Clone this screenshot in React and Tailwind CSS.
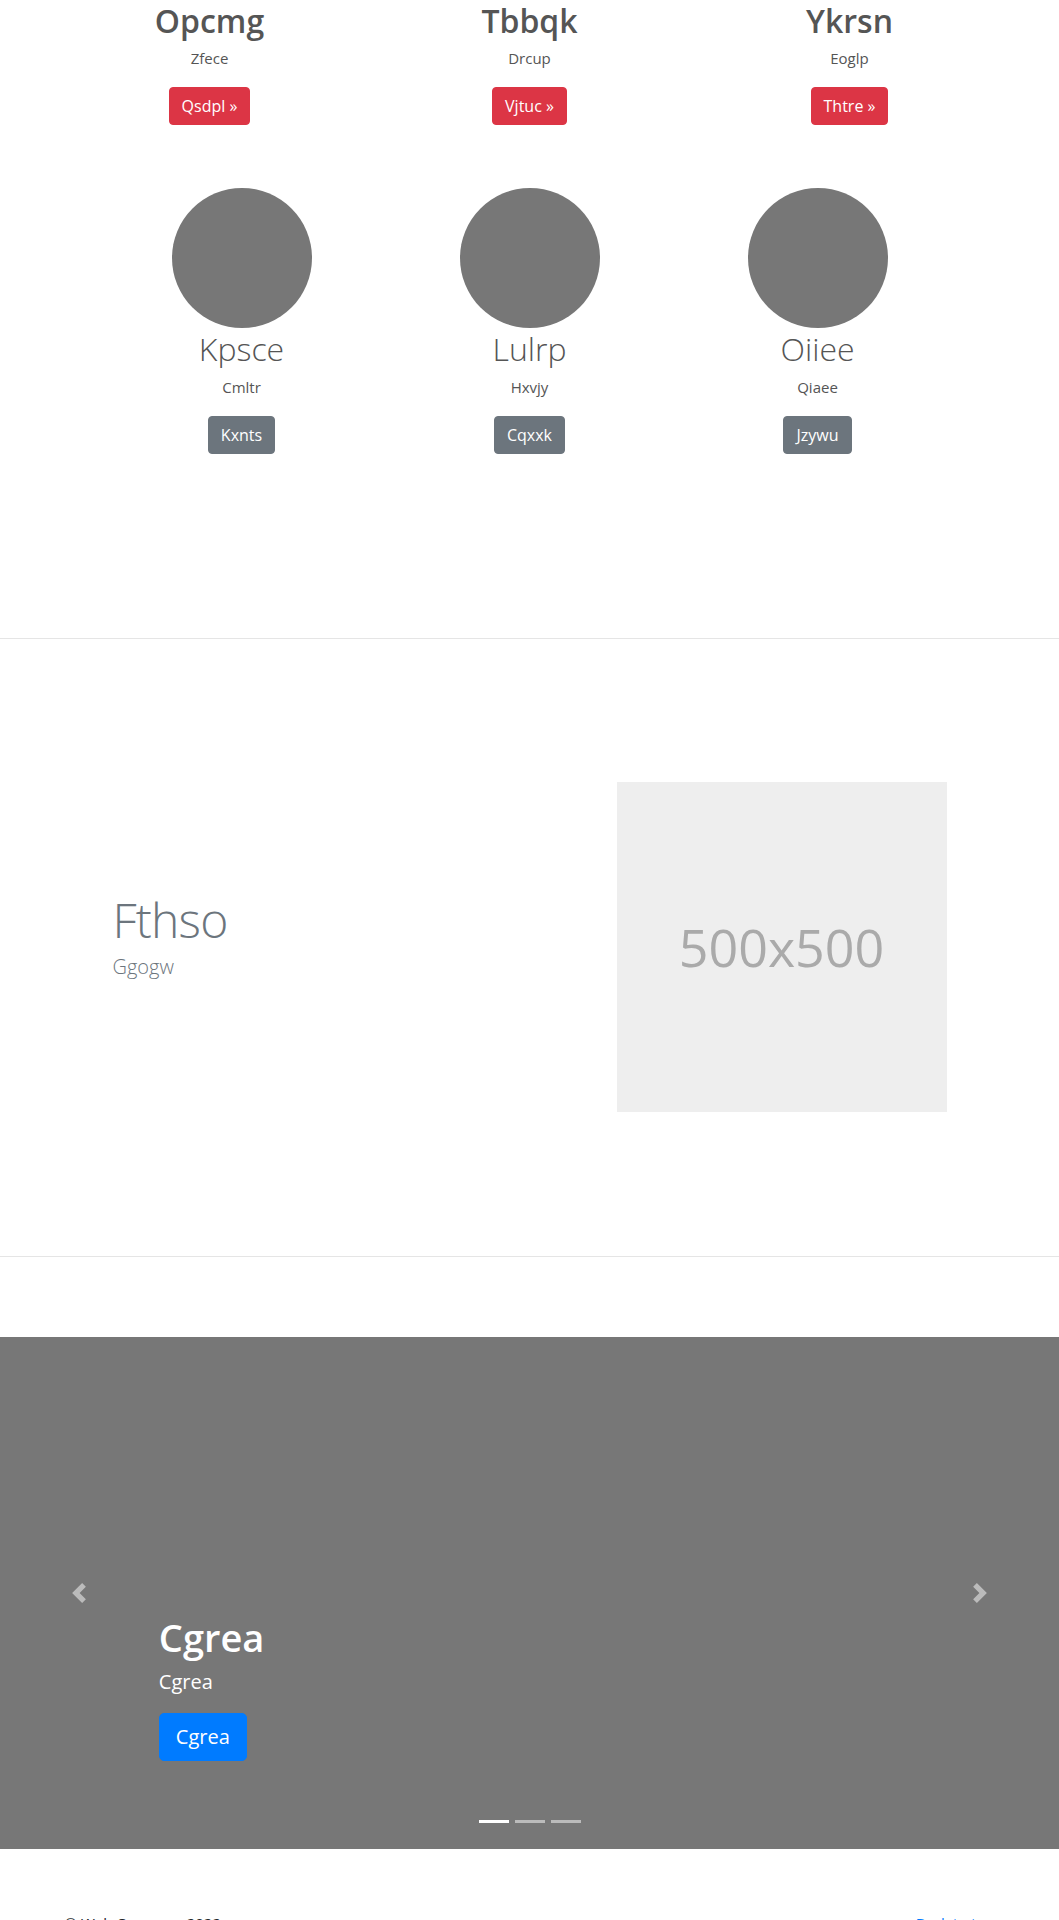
import React from 'react';

const topItems = [
  { title: 'Opcmg', text: 'Zfece', action: 'Qsdpl »' },
  { title: 'Tbbqk', text: 'Drcup', action: 'Vjtuc »' },
  { title: 'Ykrsn', text: 'Eoglp', action: 'Thtre »' },
];

const people = [
  { name: 'Kpsce', text: 'Cmltr', action: 'Kxnts' },
  { name: 'Lulrp', text: 'Hxvjy', action: 'Cqxxk' },
  { name: 'Oiiee', text: 'Qiaee', action: 'Jzywu' },
];

const ChevronLeft = () => (
  <svg width="20" height="20" viewBox="0 0 8 8" fill="#fff">
    <path d="M5.25 0l-4 4 4 4 1.5-1.5-2.5-2.5 2.5-2.5-1.5-1.5z" />
  </svg>
);

const ChevronRight = () => (
  <svg width="20" height="20" viewBox="0 0 8 8" fill="#fff">
    <path d="M2.75 0l-1.5 1.5 2.5 2.5-2.5 2.5 1.5 1.5 4-4-4-4z" />
  </svg>
);

const App = () => {
  return (
    <div className="min-h-screen bg-white font-['Open_Sans','Noto_Sans',sans-serif] text-[#212529]">
      <div className="mx-auto w-[960px]">
        {/* Top row */}
        <div className="grid grid-cols-3 pt-[2px]">
          {topItems.map((item, i) => (
            <div key={i} className="px-[15px] text-center">
              <h2 className="mb-2 text-[32px] font-semibold leading-[1.2] text-[#555]">
                {item.title}
              </h2>
              <p className="mb-[18px] text-[15px] leading-[21px] text-[#555]">
                {item.text}
              </p>
              <button className="rounded border border-[#dc3545] bg-[#dc3545] px-3 py-1.5 text-base leading-6 text-white">
                {item.action}
              </button>
            </div>
          ))}
        </div>

        {/* Circles */}
        <div className="mt-[63px] grid grid-cols-3 px-12">
          {people.map((p, i) => (
            <div key={i} className="px-[15px] text-center">
              <div className="mx-auto h-[140px] w-[140px] rounded-full bg-[#777]"></div>
              <h2 className="mb-2 mt-0.5 text-[32px] font-light leading-[1.2] text-[#555]">
                {p.name}
              </h2>
              <p className="mb-[18px] text-[15px] leading-[21px] text-[#555]">
                {p.text}
              </p>
              <button className="rounded border border-[#6c757d] bg-[#6c757d] px-3 py-1.5 text-base leading-6 text-white">
                {p.action}
              </button>
            </div>
          ))}
        </div>
      </div>

      <hr className="mt-[184px] border-t border-[#e5e5e5]" />

      {/* Featurette */}
      <div className="mx-auto w-[960px] px-12">
        <div className="mt-[143px] flex items-center">
          <div className="w-[504px] px-[15px]">
            <h2 className="mb-2 text-[48px] font-light leading-none tracking-[-0.8px] text-[#6c757d]">
              Fthso
            </h2>
            <p className="mb-4 text-xl font-light leading-[30px] text-[#6c757d]">
              Ggogw
            </p>
          </div>
          <div className="w-[360px] px-[15px]">
            <div className="flex h-[330px] w-[330px] items-center justify-center bg-[#eee]">
              <span className="text-[52px] text-[#aaa]">500x500</span>
            </div>
          </div>
        </div>
      </div>

      <hr className="mt-[144px] border-t border-[#e5e5e5]" />

      {/* Carousel */}
      <div className="relative mt-20 h-[512px] bg-[#777]">
        <div className="absolute bottom-0 left-0 top-0 flex w-[15%] items-center justify-center opacity-50">
          <ChevronLeft />
        </div>
        <div className="absolute bottom-0 right-0 top-0 flex w-[15%] items-center justify-center opacity-50">
          <ChevronRight />
        </div>

        <div className="absolute bottom-[68px] left-[15%] right-[15%] py-5 text-left text-white">
          <h1 className="mb-1.5 text-[38px] font-semibold leading-[1.2]">Cgrea</h1>
          <p className="mb-4 text-xl leading-[30px]">Cgrea</p>
          <button className="rounded-[5px] border border-[#007bff] bg-[#007bff] px-4 py-2 text-xl leading-[30px] text-white">
            Cgrea
          </button>
        </div>

        <div className="absolute bottom-[26px] left-0 right-0 flex justify-center gap-[6px]">
          <span className="h-[3px] w-[30px] bg-white"></span>
          <span className="h-[3px] w-[30px] bg-white/50"></span>
          <span className="h-[3px] w-[30px] bg-white/50"></span>
        </div>
      </div>

      {/* Footer */}
      <footer className="mx-auto flex w-[960px] justify-between px-[15px] pb-8 pt-[62px] text-[15px] leading-6">
        <p>© Web Company 2022</p>
        <a href="#" className="text-[#007bff]">
          Back to top
        </a>
      </footer>
    </div>
  );
};

export default App;
